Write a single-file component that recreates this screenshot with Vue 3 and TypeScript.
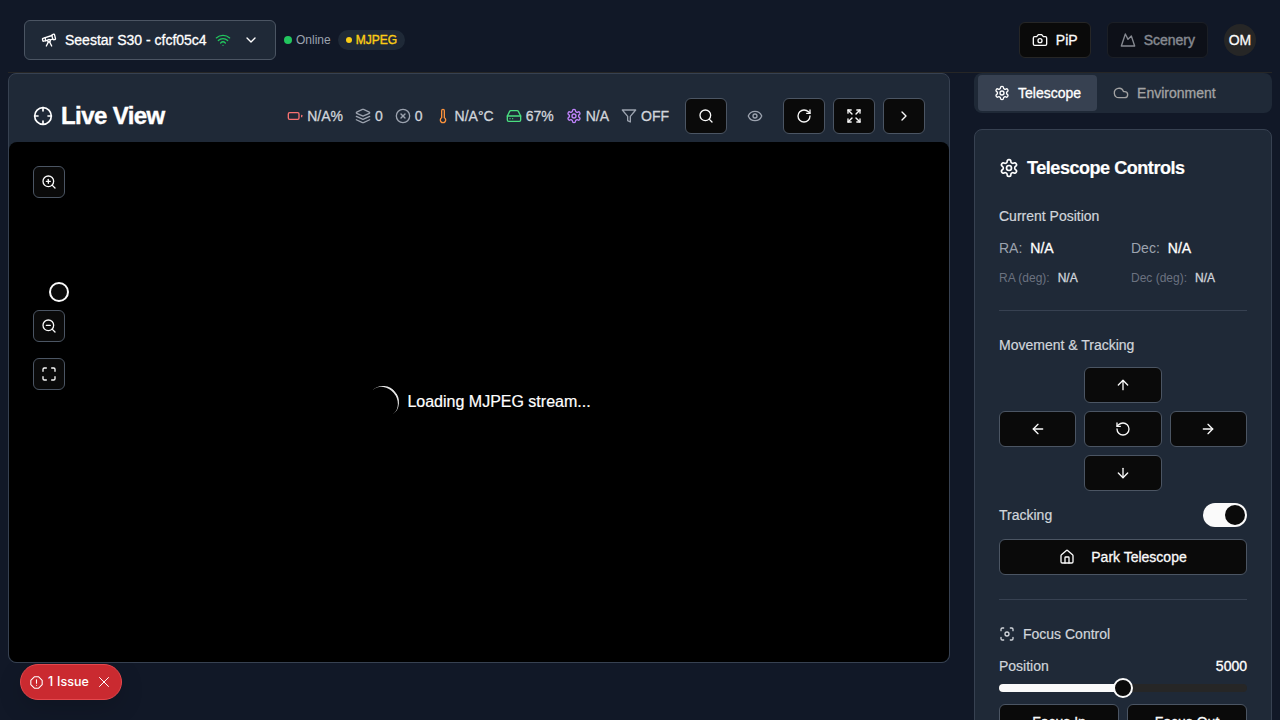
<script setup lang="ts">
import { h, type FunctionalComponent } from 'vue'

type Shape = [tag: string, attrs: Record<string, string | number>]

const p = (d: string): Shape => ['path', { d }]
const c = (cx: number, cy: number, r: number): Shape => ['circle', { cx, cy, r }]

const lens: Shape[] = [c(11, 11, 8), p('m21 21-4.35-4.35')]

const shapes: Record<string, Shape[]> = {
  telescope: [
    p('m10.065 12.493-6.18 1.318a.934.934 0 0 1-1.108-.702l-.537-2.15a1.07 1.07 0 0 1 .691-1.265l13.504-4.44'),
    p('m13.56 11.747 4.332-.924'),
    p('m16 21-3.105-6.21'),
    p('M16.485 5.94a2 2 0 0 1 1.455-2.425l1.09-.272a1 1 0 0 1 1.212.727l1.515 6.06a1 1 0 0 1-.727 1.213l-1.09.272a2 2 0 0 1-2.425-1.455z'),
    p('m6.158 8.633 1.114 4.456'),
    p('m8 21 3.105-6.21'),
    c(12, 13, 2),
  ],
  wifi: [p('M12 20h.01'), p('M2 8.82a15 15 0 0 1 20 0'), p('M5 12.859a10 10 0 0 1 14 0'), p('M8.5 16.429a5 5 0 0 1 7 0')],
  chevronDown: [p('m6 9 6 6 6-6')],
  chevronRight: [p('m9 18 6-6-6-6')],
  camera: [p('M14.5 4h-5L7 7H4a2 2 0 0 0-2 2v9a2 2 0 0 0 2 2h16a2 2 0 0 0 2-2V9a2 2 0 0 0-2-2h-3l-2.5-3z'), c(12, 13, 3)],
  mountain: [p('m8 3 4 8 5-5 5 15H2L8 3z')],
  settings: [
    p('M12.22 2h-.44a2 2 0 0 0-2 2v.18a2 2 0 0 1-1 1.73l-.43.25a2 2 0 0 1-2 0l-.15-.08a2 2 0 0 0-2.73.73l-.22.38a2 2 0 0 0 .73 2.73l.15.1a2 2 0 0 1 1 1.72v.51a2 2 0 0 1-1 1.74l-.15.09a2 2 0 0 0-.73 2.73l.22.38a2 2 0 0 0 2.73.73l.15-.08a2 2 0 0 1 2 0l.43.25a2 2 0 0 1 1 1.73V20a2 2 0 0 0 2 2h.44a2 2 0 0 0 2-2v-.18a2 2 0 0 1 1-1.73l.43-.25a2 2 0 0 1 2 0l.15.08a2 2 0 0 0 2.73-.73l.22-.39a2 2 0 0 0-.73-2.73l-.15-.08a2 2 0 0 1-1-1.74v-.5a2 2 0 0 1 1-1.74l.15-.09a2 2 0 0 0 .73-2.73l-.22-.38a2 2 0 0 0-2.73-.73l-.15.08a2 2 0 0 1-2 0l-.43-.25a2 2 0 0 1-1-1.73V4a2 2 0 0 0-2-2z'),
    c(12, 12, 3),
  ],
  cloud: [p('M17.5 19H9a7 7 0 1 1 6.71-9h1.79a4.5 4.5 0 1 1 0 9Z')],
  crosshair: [c(12, 12, 10), p('M22 12h-4'), p('M6 12H2'), p('M12 6V2'), p('M12 22v-4')],
  battery: [['rect', { x: 2, y: 7, width: 16, height: 10, rx: 2 }], p('M22 11v2')],
  layers: [
    p('m12.83 2.18a2 2 0 0 0-1.66 0L2.6 6.08a1 1 0 0 0 0 1.83l8.58 3.91a2 2 0 0 0 1.66 0l8.58-3.9a1 1 0 0 0 0-1.83Z'),
    p('m22 17.65-9.17 4.16a2 2 0 0 1-1.66 0L2 17.65'),
    p('m22 12.65-9.17 4.16a2 2 0 0 1-1.66 0L2 12.65'),
  ],
  circleX: [c(12, 12, 10), p('m15 9-6 6'), p('m9 9 6 6')],
  thermometer: [p('M14 4v10.54a4 4 0 1 1-4 0V4a2 2 0 0 1 4 0Z')],
  drive: [
    p('M22 12H2'),
    p('M5.45 5.11 2 12v6a2 2 0 0 0 2 2h16a2 2 0 0 0 2-2v-6l-3.45-6.89A2 2 0 0 0 16.76 4H7.24a2 2 0 0 0-1.79 1.11z'),
    p('M6 16h.01'),
    p('M10 16h.01'),
  ],
  filter: [p('M22 3H2l8 9.46V19l4 2v-8.54L22 3z')],
  search: [c(11, 11, 8), p('m21 21-4.3-4.3')],
  eye: [p('M2.062 12.348a1 1 0 0 1 0-.696 10.75 10.75 0 0 1 19.876 0 1 1 0 0 1 0 .696 10.75 10.75 0 0 1-19.876 0'), c(12, 12, 3)],
  rotateCw: [p('M21 12a9 9 0 1 1-9-9c2.52 0 4.93 1 6.74 2.74L21 8'), p('M21 3v5h-5')],
  rotateCcw: [p('M3 12a9 9 0 1 0 9-9 9.75 9.75 0 0 0-6.74 2.74L3 8'), p('M3 3v5h5')],
  expand: [
    p('m15 15 6 6'), p('m15 9 6-6'), p('M21 16.2V21h-4.8'), p('M21 7.8V3h-4.8'),
    p('M3 16.2V21h4.8'), p('m3 21 6-6'), p('M3 7.8V3h4.8'), p('M9 9 3 3'),
  ],
  zoomIn: [...lens, p('M11 8v6'), p('M8 11h6')],
  zoomOut: [...lens, p('M8 11h6')],
  maximize: [p('M8 3H5a2 2 0 0 0-2 2v3'), p('M21 8V5a2 2 0 0 0-2-2h-3'), p('M3 16v3a2 2 0 0 0 2 2h3'), p('M16 21h3a2 2 0 0 0 2-2v-3')],
  up: [p('m5 12 7-7 7 7'), p('M12 19V5')],
  down: [p('M12 5v14'), p('m19 12-7 7-7-7')],
  left: [p('m12 19-7-7 7-7'), p('M19 12H5')],
  right: [p('M5 12h14'), p('m12 5 7 7-7 7')],
  home: [
    p('M15 21v-8a1 1 0 0 0-1-1h-4a1 1 0 0 0-1 1v8'),
    p('M3 10a2 2 0 0 1 .709-1.528l7-5.999a2 2 0 0 1 2.582 0l7 5.999A2 2 0 0 1 21 10v9a2 2 0 0 1-2 2H5a2 2 0 0 1-2-2z'),
  ],
  focus: [c(12, 12, 3), p('M3 7V5a2 2 0 0 1 2-2h2'), p('M17 3h2a2 2 0 0 1 2 2v2'), p('M21 17v2a2 2 0 0 1-2 2h-2'), p('M7 21H5a2 2 0 0 1-2-2v-2')],
  alert: [p('M8 1.5h8l6.5 6.5v8L16 22.5H8L1.5 16V8z'), p('M12 6.8v6.4'), p('M12 17h.01')],
  close: [p('M21 3 3 21'), p('m3 3 18 18')],
}

const Icon: FunctionalComponent<{ name: string; size?: number }> = (props) =>
  h(
    'svg',
    {
      width: props.size ?? 16,
      height: props.size ?? 16,
      viewBox: '0 0 24 24',
      fill: 'none',
      stroke: 'currentColor',
      'stroke-width': 2,
      'stroke-linecap': 'round',
      'stroke-linejoin': 'round',
      style: { display: 'block', flex: 'none' },
    },
    shapes[props.name].map(([tag, attrs]) => h(tag, attrs)),
  )
Icon.props = ['name', 'size']

const stats = [
  { icon: 'battery', tone: 'red', value: 'N/A%' },
  { icon: 'layers', tone: 'gray', value: '0' },
  { icon: 'circleX', tone: 'gray', value: '0' },
  { icon: 'thermometer', tone: 'orange', value: 'N/A°C' },
  { icon: 'drive', tone: 'green', value: '67%' },
  { icon: 'settings', tone: 'purple', value: 'N/A' },
  { icon: 'filter', tone: 'gray', value: 'OFF' },
]
const focusPosition = 5000
const focusPercent = `${(focusPosition / 10000) * 100}%`
</script>

<template>
  <div class="app">
    <header class="topbar">
      <div class="group">
        <button class="device">
          <Icon name="telescope" />
          <span>Seestar S30 - cfcf05c4</span>
          <Icon name="wifi" class="wifi" />
          <Icon name="chevronDown" class="caret" />
        </button>
        <div class="status"><i class="dot"></i>Online</div>
        <div class="mode"><i class="dot small"></i>MJPEG</div>
      </div>
      <div class="group actions">
        <button class="btn pip"><Icon name="camera" />PiP</button>
        <button class="btn scenery" disabled><Icon name="mountain" />Scenery</button>
        <div class="avatar">OM</div>
      </div>
    </header>

    <main class="main">
      <section class="view">
        <div class="view-head">
          <h2 class="view-title"><Icon name="crosshair" :size="20" />Live View</h2>
          <div class="tools">
            <div class="stats">
              <div v-for="s in stats" :key="s.icon" class="stat">
                <Icon :name="s.icon" :class="s.tone" />{{ s.value }}
              </div>
            </div>
            <div class="buttons">
              <button class="btn tool"><Icon name="search" /></button>
              <button class="ghost"><Icon name="eye" /></button>
              <button class="btn tool"><Icon name="rotateCw" /></button>
              <button class="btn tool"><Icon name="expand" /></button>
              <button class="btn tool"><Icon name="chevronRight" /></button>
            </div>
          </div>
        </div>
        <div class="stage">
          <div class="zoom">
            <button class="btn square"><Icon name="zoomIn" /></button>
            <div class="zoom-slider"><span class="thumb"></span></div>
            <button class="btn square"><Icon name="zoomOut" /></button>
            <button class="btn square fit"><Icon name="maximize" /></button>
          </div>
          <div class="loading"><span class="spinner"></span>Loading MJPEG stream...</div>
        </div>
      </section>

      <aside class="side">
        <div class="tabs">
          <button class="tab active"><Icon name="settings" />Telescope</button>
          <button class="tab"><Icon name="cloud" />Environment</button>
        </div>
        <section class="card">
          <h3 class="card-title"><Icon name="settings" :size="20" />Telescope Controls</h3>

          <div class="block">
            <div class="label">Current Position</div>
            <div class="pair">
              <div>RA:<b>N/A</b></div>
              <div>Dec:<b>N/A</b></div>
            </div>
            <div class="pair fine">
              <div>RA (deg):<b>N/A</b></div>
              <div>Dec (deg):<b>N/A</b></div>
            </div>
          </div>

          <div class="block">
            <div class="label">Movement &amp; Tracking</div>
            <div class="pad">
              <span></span>
              <button class="btn"><Icon name="up" /></button>
              <span></span>
              <button class="btn"><Icon name="left" /></button>
              <button class="btn"><Icon name="rotateCcw" /></button>
              <button class="btn"><Icon name="right" /></button>
              <span></span>
              <button class="btn"><Icon name="down" /></button>
              <span></span>
            </div>
            <div class="row">
              <span class="label">Tracking</span>
              <span class="switch"><i class="knob"></i></span>
            </div>
            <button class="btn park"><Icon name="home" />Park Telescope</button>
          </div>

          <div class="block">
            <div class="label with-icon"><Icon name="focus" />Focus Control</div>
            <div>
              <div class="row"><span class="label">Position</span><span class="value">{{ focusPosition }}</span></div>
              <div class="slider">
                <div class="fill" :style="{ width: focusPercent }"></div>
                <span class="thumb" :style="{ left: focusPercent }"></span>
              </div>
            </div>
            <div class="halves">
              <button class="btn">Focus In</button>
              <button class="btn">Focus Out</button>
            </div>
          </div>
        </section>
      </aside>
    </main>

    <div class="issue">
      <Icon name="alert" :size="13" /><span>1 Issue</span><Icon name="close" :size="12" class="dismiss" />
    </div>
  </div>
</template>

<style>
body {
  margin: 0;
  overflow: hidden;
  background: #111827;
}
</style>

<style scoped>
* {
  box-sizing: border-box;
}
.app {
  position: relative;
  height: 720px;
  overflow: hidden;
  padding: 0 8px;
  background: #111827;
  color: #fff;
  font-family: 'Liberation Sans', Arial, sans-serif;
  font-size: 14px;
  line-height: 20px;
}
button {
  font: inherit;
  color: inherit;
  background: none;
  border: 0;
  padding: 0;
  display: flex;
  align-items: center;
  justify-content: center;
}
h2, h3 {
  margin: 0;
}
.btn {
  height: 36px;
  background: #0a0a0a;
  border: 1px solid #4b5563;
  border-radius: 6px;
  color: #fafafa;
  -webkit-text-stroke: 0.3px currentColor;
}
.topbar {
  height: 73px;
  padding: 0 16px;
  border-bottom: 1px solid #262626;
  display: flex;
  align-items: center;
  justify-content: space-between;
}
.group {
  display: flex;
  align-items: center;
  height: 72px;
  padding-top: 8px;
}
.device {
  width: 252px;
  height: 40px;
  padding: 0 16px;
  gap: 8px;
  justify-content: flex-start;
  background: #1f2937;
  border: 1px solid #4b5563;
  border-radius: 6px;
  -webkit-text-stroke: 0.3px currentColor;
}
.wifi {
  color: #22c55e;
}
.caret {
  margin-left: 4px;
}
.status {
  display: flex;
  align-items: center;
  gap: 4px;
  margin-left: 8px;
  font-size: 12px;
  color: #9ca3af;
}
.dot {
  width: 8px;
  height: 8px;
  border-radius: 50%;
  background: #22c55e;
}
.mode {
  display: flex;
  align-items: center;
  gap: 4px;
  height: 20px;
  margin-left: 7px;
  padding: 0 8px;
  border-radius: 10px;
  background: #1f2937;
  color: #facc15;
  font-size: 12px;
  -webkit-text-stroke: 0.4px currentColor;
}
.dot.small {
  width: 6px;
  height: 6px;
  background: #facc15;
}
.pip, .scenery {
  gap: 8px;
  padding: 0 12px;
  border-color: #262626;
}
.scenery {
  opacity: 0.5;
  margin: 0 16px;
}
.avatar {
  width: 32px;
  height: 32px;
  border-radius: 50%;
  background: #262626;
  color: #fafafa;
  display: flex;
  align-items: center;
  justify-content: center;
  -webkit-text-stroke: 0.3px currentColor;
}
.main {
  display: grid;
  grid-template-columns: 942px 298px;
  gap: 24px;
  align-items: start;
}
.view {
  height: 590px;
  border: 1px solid #374151;
  border-radius: 8px;
  background: #1f2937;
  display: flex;
  flex-direction: column;
}
.view-head {
  height: 68px;
  padding: 24px 24px 8px;
  display: flex;
  align-items: center;
  justify-content: space-between;
}
.view-title {
  display: flex;
  align-items: center;
  gap: 8px;
  font-size: 24px;
  line-height: 24px;
  letter-spacing: -0.6px;
  -webkit-text-stroke: 0.4px currentColor;
}
.tools, .stats, .buttons {
  display: flex;
  align-items: center;
}
.tools {
  gap: 16px;
}
.stats {
  gap: 12px;
}
.buttons {
  gap: 8px;
}
.stat {
  display: flex;
  align-items: center;
  gap: 4px;
  color: #d1d5db;
  -webkit-text-stroke: 0.3px currentColor;
}
.red { color: #f87171; }
.gray { color: #9ca3af; }
.orange { color: #fb923c; }
.green { color: #4ade80; }
.purple { color: #c084fc; }
.tool {
  width: 42px;
}
.ghost {
  width: 40px;
  height: 36px;
  color: #9ca3af;
}
.stage {
  flex: 1;
  position: relative;
  display: flex;
  align-items: center;
  justify-content: center;
  background: #000;
  border-radius: 8px;
}
.zoom {
  position: absolute;
  left: 24px;
  top: 24px;
  display: flex;
  flex-direction: column;
  gap: 8px;
}
.square {
  width: 32px;
  height: 32px;
}
.fit {
  margin-top: 8px;
}
.zoom-slider {
  position: relative;
  height: 96px;
}
.thumb {
  position: absolute;
  width: 20px;
  height: 20px;
  border: 2px solid #fafafa;
  border-radius: 50%;
  background: #0a0a0a;
}
.zoom-slider .thumb {
  left: 16px;
  bottom: 0;
}
.loading {
  display: flex;
  align-items: center;
  gap: 8px;
  font-size: 16px;
  line-height: 24px;
  -webkit-text-stroke: 0.2px currentColor;
}
.spinner {
  width: 32px;
  height: 32px;
  border-radius: 50%;
  border-bottom: 2px solid #e5e5e5;
  transform: rotate(-130deg);
}
.tabs {
  height: 40px;
  padding: 2px 4px;
  border-radius: 8px;
  background: #1f2937;
  display: flex;
}
.tab {
  height: 36px;
  padding: 0 16px;
  gap: 8px;
  border-radius: 4px;
  color: #a3a3a3;
  -webkit-text-stroke: 0.3px currentColor;
}
.tab.active {
  background: #374151;
  color: #fff;
}
.card {
  margin-top: 16px;
  height: 800px;
  padding: 24px;
  border: 1px solid #374151;
  border-radius: 8px;
  background: #1f2937;
}
.card-title {
  display: flex;
  align-items: center;
  gap: 8px;
  height: 28px;
  margin-bottom: 24px;
  font-size: 18px;
  letter-spacing: -0.45px;
  -webkit-text-stroke: 0.2px currentColor;
}
.block {
  display: flex;
  flex-direction: column;
  gap: 12px;
}
.block + .block {
  margin-top: 24px;
  padding-top: 24px;
  border-top: 1px solid #374151;
}
.label {
  color: #d1d5db;
  -webkit-text-stroke: 0.2px currentColor;
}
.with-icon {
  display: flex;
  align-items: center;
  gap: 8px;
}
.pair {
  display: grid;
  grid-template-columns: 1fr 1fr;
  gap: 16px;
  color: #9ca3af;
}
.pair b {
  margin-left: 8px;
  font-weight: 400;
  color: #fff;
  -webkit-text-stroke: 0.3px currentColor;
}
.pair.fine {
  font-size: 12px;
  line-height: 16px;
  color: #6b7280;
}
.pair.fine b {
  color: #d1d5db;
}
.pad {
  display: grid;
  grid-template-columns: repeat(3, 1fr);
  gap: 8px;
}
.row {
  display: flex;
  align-items: center;
  justify-content: space-between;
}
.switch {
  width: 44px;
  height: 24px;
  padding: 2px;
  border-radius: 12px;
  background: #fafafa;
  display: flex;
  justify-content: flex-end;
}
.knob {
  width: 20px;
  height: 20px;
  border-radius: 50%;
  background: #0a0a0a;
}
.park {
  gap: 16px;
}
.slider {
  position: relative;
  height: 8px;
  margin-top: 8px;
  border-radius: 4px;
  background: #262626;
}
.fill {
  height: 8px;
  border-radius: 4px 0 0 4px;
  background: #fafafa;
}
.slider .thumb {
  top: -6px;
  margin-left: -10px;
}
.value {
  -webkit-text-stroke: 0.3px currentColor;
}
.halves {
  display: grid;
  grid-template-columns: 1fr 1fr;
  gap: 8px;
}
.issue {
  position: absolute;
  left: 20px;
  top: 664px;
  width: 102px;
  height: 36px;
  padding: 0 9px;
  border: 1px solid #e5484d;
  border-radius: 18px;
  background: #ca2a30;
  display: flex;
  align-items: center;
  font-family: Inter, sans-serif;
  font-size: 12.5px;
  font-weight: 500;
  box-shadow: 0 8px 24px rgba(0, 0, 0, 0.15);
}
.issue span {
  margin-left: 5px;
  width: 42px;
  word-spacing: 0.5px;
  white-space: nowrap;
}
.dismiss {
  margin-left: 8px;
}
</style>
